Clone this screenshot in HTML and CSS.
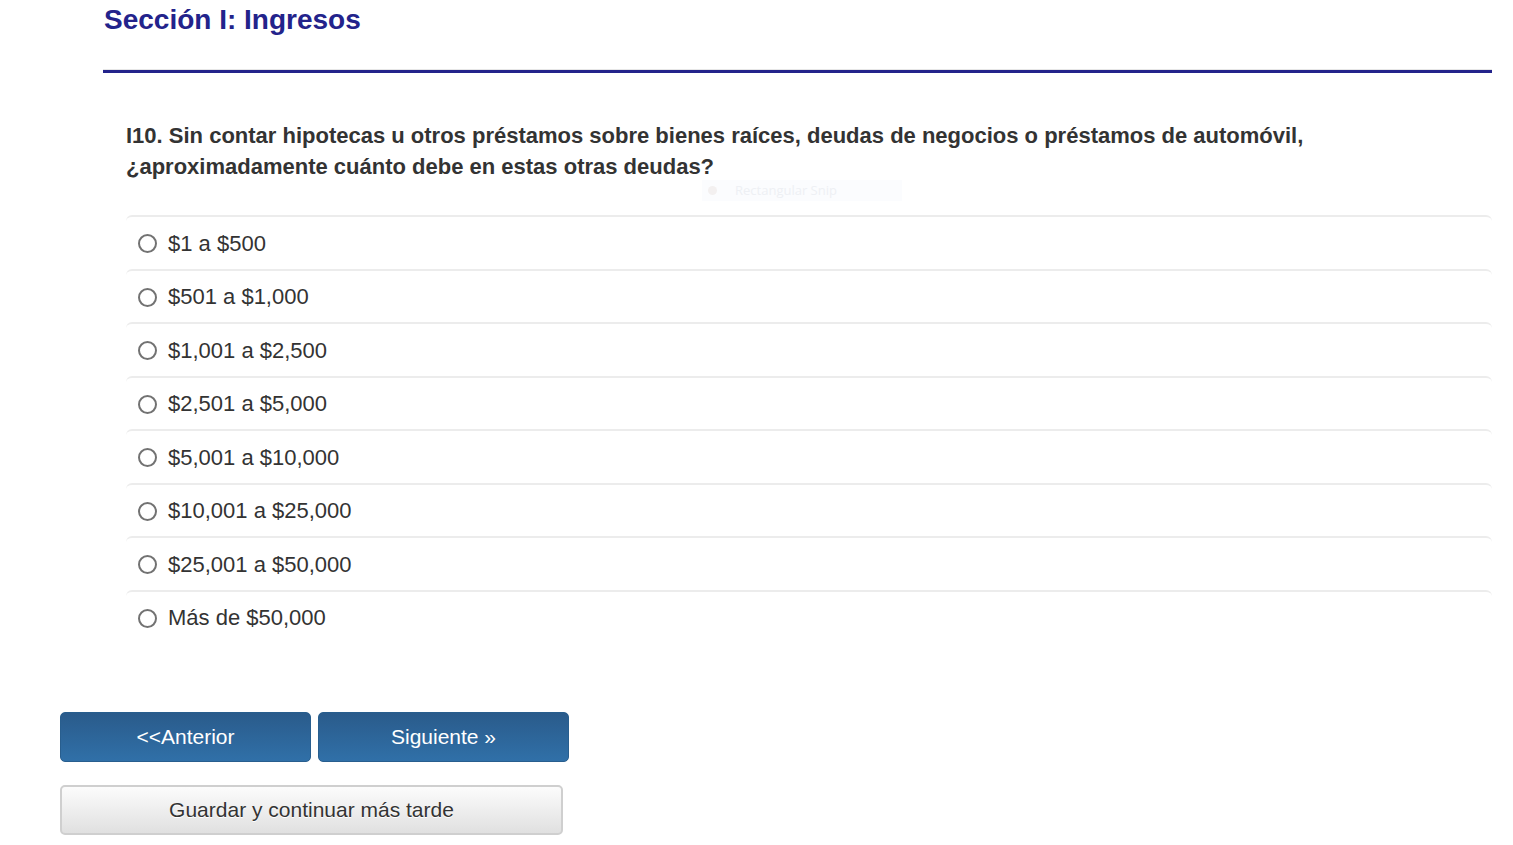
FILE: index.html
```html
<!DOCTYPE html>
<html lang="es">
<head>
<meta charset="utf-8">
<title>Sección I: Ingresos</title>
<link rel="stylesheet" href="styles.css">
</head>
<body>
<div class="page">
  <header class="section-head">
    <h1 class="section-title">Sección I: Ingresos</h1>
    <div class="section-rule"></div>
  </header>
  <main class="question">
    <p class="question-text">I10. Sin contar hipotecas u otros préstamos sobre bienes raíces, deudas de negocios o préstamos de automóvil, ¿aproximadamente cuánto debe en estas otras deudas?</p>
    <ul class="options">
      <li class="option"><span class="radio"></span><span class="label">$1 a $500</span></li>
      <li class="option"><span class="radio"></span><span class="label">$501 a $1,000</span></li>
      <li class="option"><span class="radio"></span><span class="label">$1,001 a $2,500</span></li>
      <li class="option"><span class="radio"></span><span class="label">$2,501 a $5,000</span></li>
      <li class="option"><span class="radio"></span><span class="label">$5,001 a $10,000</span></li>
      <li class="option"><span class="radio"></span><span class="label">$10,001 a $25,000</span></li>
      <li class="option"><span class="radio"></span><span class="label">$25,001 a $50,000</span></li>
      <li class="option"><span class="radio"></span><span class="label">Más de $50,000</span></li>
    </ul>
  </main>
  <div class="nav-buttons">
    <button class="btn btn-primary">&lt;&lt;Anterior</button>
    <button class="btn btn-primary">Siguiente »</button>
  </div>
  <div class="save-row">
    <button class="btn btn-default">Guardar y continuar más tarde</button>
  </div>
  <div class="snip"><span class="snip-dot"></span>Rectangular Snip</div>
</div>
</body>
</html>
```
FILE: styles.css
```css
* { box-sizing: border-box; }
html, body { margin: 0; padding: 0; background: #fff; }
body {
  font-family: "Liberation Sans", Arial, sans-serif;
  color: #333;
}
.page {
  position: relative;
  width: 1513px;
  height: 845px;
  overflow: hidden;
}
.section-head {
  margin-left: 103px;
  width: 1389px;
}
.section-title {
  margin: 0;
  padding: 3px 0 0 1px;
  font-size: 28px;
  line-height: 34px;
  font-weight: bold;
  color: #23238b;
}
.section-rule {
  margin-top: 32px;
  height: 4px;
  border-top: 1px solid #e6e6e6;
  background: #23238b;
  background-clip: content-box;
}
.question {
  margin-left: 126px;
  width: 1366px;
}
.question-text {
  margin: 47px 0 0 0;
  font-size: 22px;
  line-height: 31px;
  font-weight: bold;
  color: #333;
  max-width: 1190px;
}
.options {
  list-style: none;
  margin: 33px 0 0 0;
  padding: 0;
}
.option {
  display: flex;
  align-items: center;
  height: 53.5px;
  border-top: 2px solid #ececec;
  border-radius: 6px 6px 0 0;
  padding: 2px 0 0 12px;
}
.radio {
  width: 19px;
  height: 19px;
  border: 2px solid #727272;
  border-radius: 50%;
  flex: none;
}
.label {
  margin-left: 11px;
  font-size: 22px;
  color: #333;
}
.nav-buttons {
  display: flex;
  gap: 7px;
  margin: 69px 0 0 60px;
}
.btn {
  font-family: "Liberation Sans", Arial, sans-serif;
  font-size: 21px;
  border-radius: 5px;
  cursor: pointer;
}
.btn-primary {
  width: 251px;
  height: 50px;
  color: #fff;
  border: 1px solid #285e8e;
  background: linear-gradient(#2a5b8b, #3070a8);
}
.save-row {
  margin: 23px 0 0 60px;
}
.btn-default {
  width: 503px;
  height: 50px;
  color: #333;
  text-shadow: 0 1px 0 #fff;
  border: 2px solid #cfcfcf;
  background: linear-gradient(#fcfcfc, #e0e0e0);
}
.snip {
  position: absolute;
  left: 702px;
  top: 180px;
  width: 200px;
  height: 21px;
  background: #fbfcfe;
  color: #eef0f4;
  font-family: "Open Sans", sans-serif;
  font-size: 13px;
  line-height: 21px;
  padding-left: 33px;
}
.snip-dot {
  position: absolute;
  left: 6px;
  top: 6px;
  width: 9px;
  height: 9px;
  border-radius: 50%;
  background: #f3f0f0;
}
```
